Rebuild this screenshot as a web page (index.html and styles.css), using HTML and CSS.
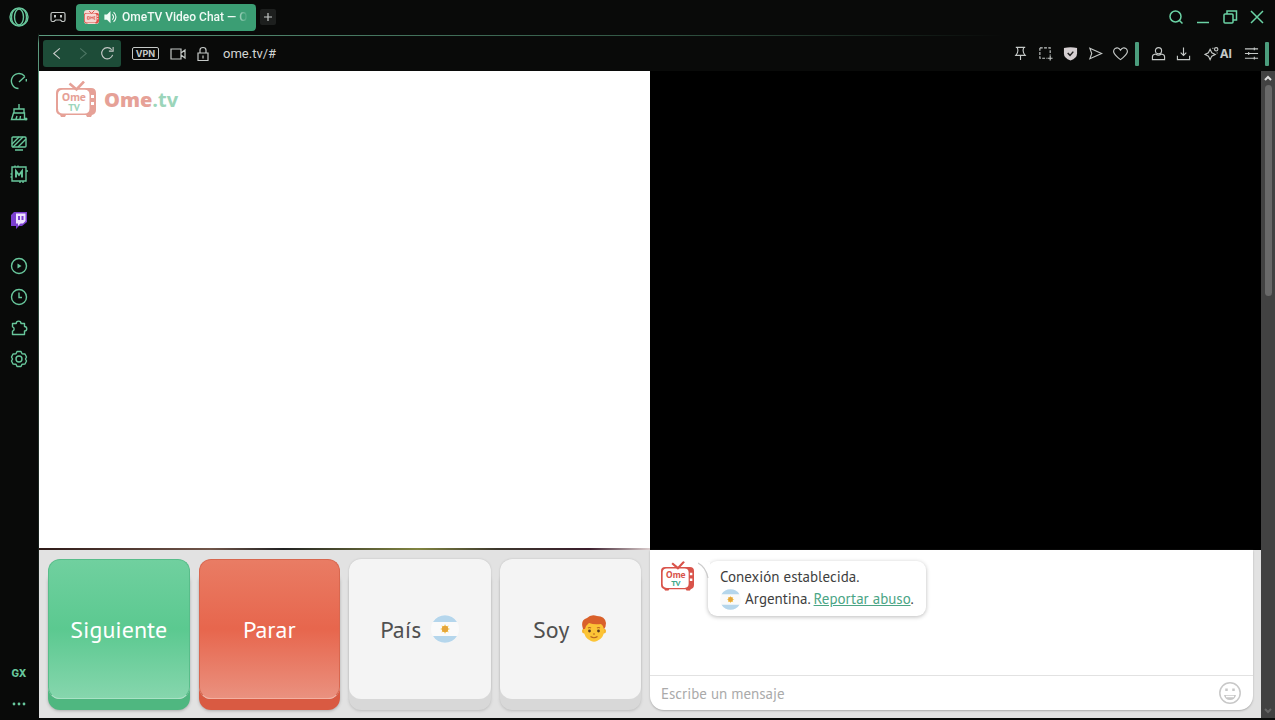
FILE: index.html
```html
<!DOCTYPE html>
<html lang="es">
<head>
    <meta charset="UTF-8">
    <meta name="viewport" content="width=device-width, initial-scale=1.0">
    <title>OmeTV Video Chat</title>
    <link rel="stylesheet" href="styles.css">
</head>
<body>

<!-- Shared drawings -->
<svg class="defs" aria-hidden="true">
    <symbol id="tv" viewBox="0 0 40 36">
        <path d="M13.500 2.500L20.500 8.500L28 0.500" fill="none" stroke="currentColor" stroke-width="2.6"/>
        <path fill="currentColor" fill-rule="evenodd" d="M5 7h30q5 0 5 5v17q0 4-4 5l-1 2h-4l-1-2H10l-1 2H5l-1-2q-4-1-4-5V12q0-5 5-5zM7 8.800q-5 0-5 5v13.600q0 5 5 5h21.500q5 0 5-5V13.800q0-5-5-5z"/>
        <path d="M35 14h3v3h-3zM35 21h3v3h-3z" fill="#fff"/>
    </symbol>
    <symbol id="flag" viewBox="0 0 28 28">
        <circle cx="14" cy="14" r="14" fill="#fafafa"/>
        <path d="M2 7A14 14 0 0 1 26 7zM2 21A14 14 0 0 0 26 21z" fill="#b5d6ec"/>
        <path d="M14 9l1.200 2.500 2.500-1-1 2.500 2.500 1-2.500 1 1 2.500-2.500-1-1.200 2.500-1-2.500-2.500 1 1-2.500-2.500-1 2.500-1-1-2.500 2.500 1z" fill="#f8cf5b"/>
        <circle cx="14" cy="14" r="3.200" fill="#e5a53a"/>
    </symbol>
</svg>

<div class="browser">
    <nav class="sidebar">
        <button class="opera" aria-label="Menu"><svg viewBox="0 0 20 20"><circle cx="10" cy="10" r="9"/><ellipse cx="10" cy="10" rx="4.500" ry="8"/><path d="M7 1.500C1 5 1 15 7 18.500M13 1.500C19 5 19 15 13 18.500"/></svg></button>
        <div class="group">
            <button aria-label="Speed dial"><svg viewBox="0 0 18 18"><path d="M8.500 16.500A7.500 7.500 0 1 1 14.500 4M9 10l6-5.500M16.300 7v2.500"/></svg></button>
            <button aria-label="Cleaner"><svg viewBox="0 0 18 18"><path d="M9 1v5M4 10V6h10v4M3.500 10h11v6.500H1.500zM6 16l1-3M10 16l.500-3"/><circle class="fill" cx="16" cy="16" r="1.500"/></svg></button>
            <button aria-label="Monitor"><svg viewBox="0 0 18 18"><rect x="2" y="3" width="14" height="10" rx="1"/><path d="M2 10l7-7M3 13L13 3M8 13l8-8M5 16h8"/></svg></button>
            <button aria-label="Mods"><svg viewBox="0 0 18 18"><path d="M2 2h14v14H2zM5 .500v2M8 .500v2M13 16v2M10 16v2M.500 9H2M.500 12H2M16 6h2"/><path d="M6 12.500V6l3 4 3-4v6.500" stroke-width="1.900"/></svg></button>
        </div>
        <div class="group">
            <button aria-label="Twitch"><svg viewBox="0 0 18 18"><path class="twitch" d="M4 1h13v10l-5 4H9l-3 3v-3H1V4z"/><path class="twitch-in" d="M6 2.500h9.500V10l-2.500 2.500h-2.500L8 15v-2.500H6z"/><path class="twitch-eye" d="M9 5v4M12.500 5v4"/></svg></button>
        </div>
        <div class="group">
            <button aria-label="Player"><svg viewBox="0 0 18 18"><circle cx="9" cy="9" r="7.500"/><path class="fill" d="M7.500 6.500l4 2.500-4 2.500z"/></svg></button>
            <button aria-label="History"><svg viewBox="0 0 18 18"><circle cx="9" cy="9" r="7.500"/><path d="M9 4.500V9.500h3"/></svg></button>
            <button aria-label="Extensions"><svg viewBox="0 0 18 18"><path d="M2.500 4.500h3.700a2.400 2.400 0 0 1 4.800 0h3.500v3a2.200 2.200 0 0 1 0 4.500v3.500h-12v-3.300a2.300 2.300 0 0 0 0-4.400z" stroke-linejoin="round"/></svg></button>
            <button aria-label="Settings"><svg viewBox="0 0 18 18"><path d="M7 1.500h4l1 2.300 3 .200 1.500 3-1 2 1 2-1.500 3-3 .300-1 2.200H7l-1-2.200-3-.300-1.500-3 1-2-1-2 1.500-3 3-.200z" stroke-linejoin="round"/><circle cx="9" cy="9" r="3"/></svg></button>
        </div>
        <div class="group last">
            <button class="gx">GX</button>
            <button aria-label="More"><svg viewBox="0 0 18 18"><g class="fill"><circle cx="4" cy="9" r="1.400"/><circle cx="9" cy="9" r="1.400"/><circle cx="14" cy="9" r="1.400"/></g></svg></button>
        </div>
    </nav>

    <div class="window">
        <header class="tabs">
            <button class="icon" aria-label="GX Corner"><svg viewBox="0 0 16 16"><path d="M2.500 3.500h11q1.500 0 1.500 1.500v6q0 1.500-1.500 1.500H12L10.500 11h-5L4 12.500H2.500Q1 12.500 1 11V5q0-1.500 1.500-1.500z"/><path d="M5 6v2.500M11 6v2.500" stroke-width="2"/></svg></button>
            <button class="tab">
                <svg class="favicon" viewBox="0 0 40 36"><use href="#tv"/><path d="M9 17h5v7H9zM18 24v-7l3 4 3-4v7M30 17h-3v7h3" stroke-width="2"/></svg>
                <svg class="sound" viewBox="0 0 16 16"><path class="fill" d="M1 5h3l4-4v14l-4-4H1z"/><path d="M10 5q3 3 0 6M11.500 2.500q5.500 5.500 0 11"/></svg>
                <span>OmeTV Video Chat — O</span>
            </button>
            <button class="new-tab" aria-label="New tab"><svg viewBox="0 0 16 16"><path d="M8 4v8M4 8h8"/></svg></button>
            <div class="controls">
                <button aria-label="Search"><svg viewBox="0 0 16 16"><circle cx="7.500" cy="7.500" r="5.500"/><path d="M11.500 11.500l3 3"/></svg></button>
                <button aria-label="Minimize"><svg viewBox="0 0 16 16"><path d="M2 13.500h12"/></svg></button>
                <button aria-label="Restore"><svg viewBox="0 0 16 16"><rect x="2" y="5" width="9" height="9" rx="1"/><path d="M5 5V2h9.500v9H11"/></svg></button>
                <button aria-label="Close"><svg viewBox="0 0 16 16"><path d="M2 2l12 12M14 2L2 14"/></svg></button>
            </div>
        </header>

        <div class="toolbar">
            <div class="nav">
                <button aria-label="Back"><svg viewBox="0 0 16 16"><path d="M10.500 2.500L4 8l6.500 5.500"/></svg></button>
                <button aria-label="Forward" disabled><svg viewBox="0 0 16 16"><path d="M5.500 2.500L12 8l-6.500 5.500"/></svg></button>
                <button aria-label="Reload"><svg viewBox="0 0 16 16"><path d="M13.500 9.500A6 6 0 1 1 12.500 4M14 1v4.500H9.500"/></svg></button>
            </div>
            <button class="vpn">VPN</button>
            <button class="icon" aria-label="Camera"><svg viewBox="0 0 16 16"><path d="M1 3h10v10H1zM11 7l4-3v8l-4-3"/></svg></button>
            <button class="icon" aria-label="Site information"><svg viewBox="0 0 16 16"><path d="M3 7h10v7.500H3zM5 7V4q0-2.500 3-2.500T11 4v3M8 9.500v3"/></svg></button>
            <input class="address" type="text" value="ome.tv/#" aria-label="Address">
            <div class="tools">
                <button aria-label="Pin"><svg viewBox="0 0 16 16"><path d="M3 1.500h10M4.500 1.500Q6.500 6 3 10h10q-3.500-4-1.500-8.500M8 10v5"/></svg></button>
                <button aria-label="Snapshot"><svg viewBox="0 0 16 16"><path d="M2 2h11v8M2 2v11h8" stroke-dasharray="3 1.500"/><path d="M13 10.500v5M10.500 13h5"/></svg></button>
                <button aria-label="Blocker"><svg viewBox="0 0 16 16"><path class="shield" d="M1 2q7-1.500 14 0v6q0 5-7 7.500-7-2.500-7-7.500z"/><path class="check" d="M5 7.500l2.500 2.500L11 6"/></svg></button>
                <button aria-label="Send"><svg viewBox="0 0 16 16"><path d="M2 2.500L14.500 8 2 13.500 4 8z"/></svg></button>
                <button aria-label="Favourites"><svg viewBox="0 0 16 16"><path d="M8 14.500Q-2.500 7 2 2.800 5.500.500 8 4.500 10.500.500 14 2.800 18.500 7 8 14.500z"/></svg></button>
                <i class="bar"></i>
                <button class="after-bar" aria-label="Profile"><svg viewBox="0 0 16 16"><circle cx="8" cy="5" r="3.300"/><path d="M5 8.500q-3.500.500-3.500 3v3h13v-3q0-2.500-3.500-3-3 2.500-6 0z"/></svg></button>
                <button aria-label="Downloads"><svg viewBox="0 0 16 16"><path d="M8 1.500V10M5 7l3 3 3-3M1.500 10.500v4h13v-4"/></svg></button>
                <button class="ai"><svg viewBox="0 0 16 16"><path d="M6.500 3.500L8.300 7.200 12 9l-3.700 1.800-1.800 3.700-1.800-3.700L1 9l3.700-1.800z"/><circle cx="13" cy="3.500" r="1.800"/><path d="M9 2.500h1M13.500 7.500h1"/></svg>AI</button>
                <button aria-label="Easy setup"><svg viewBox="0 0 16 16"><path d="M1 3h14M1 8h14M1 13h14M11 1.500v3M5 6.500v3M11 11.500v3"/></svg></button>
                <i class="bar"></i>
            </div>
        </div>

        <div class="viewport">
            <main class="page">
                <section class="video partner">
                    <a class="logo" href="#">
                        <svg viewBox="0 0 40 36"><use href="#tv"/><text class="tv-ome" x="18" y="20" text-anchor="middle">Ome</text><text class="tv-tv" x="18" y="30" text-anchor="middle">TV</text></svg>
                        <span>Ome<b>.tv</b></span>
                    </a>
                    <div class="video-edge"></div>
                </section>
                <section class="video own"></section>

                <section class="buttons">
                    <button class="btn green">Siguiente</button>
                    <button class="btn red">Parar</button>
                    <button class="btn">País <svg viewBox="0 0 28 28"><use href="#flag"/></svg></button>
                    <button class="btn">Soy
                        <svg viewBox="0 0 28 28">
                            <circle cx="4.500" cy="16" r="2.500" fill="#f5b52e"/>
                            <circle cx="23.500" cy="16" r="2.500" fill="#f5b52e"/>
                            <path d="M4 10q0-6 10-6t10 6v6q0 7-7 10-3 1.500-6 0-7-3-7-10z" fill="#fcc436"/>
                            <path d="M3 14Q0 5 7 3q4-4 10-2 8 0 9 7 0 4-2 6-1-4-3-5-7 1-12-1-3 2-4 6z" fill="#d9602a"/>
                            <circle cx="9.500" cy="16" r="1.400" fill="#5b3a20"/>
                            <circle cx="18.500" cy="16" r="1.400" fill="#5b3a20"/>
                            <path d="M8 13q1.500-1 3 0M17 13q1.500-1 3 0M13 19h2M10.500 21.500q3.500 2.500 7 0" fill="none" stroke="#b96420"/>
                        </svg>
                    </button>
                </section>

                <section class="chat-wrap">
                    <div class="chat">
                        <div class="messages">
                            <svg class="avatar" viewBox="0 0 40 36"><use href="#tv"/><text class="tv-ome" x="18" y="20" text-anchor="middle">Ome</text><text class="tv-tv" x="18" y="30" text-anchor="middle">TV</text></svg>
                            <div class="bubble">
                                <svg class="tail" viewBox="0 0 12 16"><path d="M12 0H0q7 4 10 14l2 2z" fill="#fff"/><path d="M0 1q8 4 10 15" fill="none" stroke="#ccc"/></svg>
                                <p>Conexión establecida.</p>
                                <p class="country"><svg viewBox="0 0 28 28"><use href="#flag"/></svg><span>Argentina. <a href="#">Reportar abuso</a>.</span></p>
                            </div>
                        </div>
                        <form class="compose">
                            <input type="text" placeholder="Escribe un mensaje" aria-label="Escribe un mensaje">
                            <button type="button" aria-label="Emoji"><svg viewBox="0 0 24 24"><circle cx="12" cy="12" r="10.200"/><path class="fill" d="M6 14h12q-1 5-6 5t-6-5z"/><path d="M8.500 7.500v2.500M15.500 7.500v2.500" stroke-width="2.500"/><path d="M8 15.500h8" stroke="#fff"/></svg></button>
                        </form>
                    </div>
                </section>
            </main>
            <div class="scrollbar">
                <svg viewBox="0 0 8 6"><path d="M1 5l3-3 3 3"/></svg>
                <div class="thumb"></div>
                <svg class="down" viewBox="0 0 8 6"><path d="M1 1l3 3 3-3"/></svg>
            </div>
        </div>
    </div>
</div>

</body>
</html>
```
FILE: styles.css
```css
* {
    box-sizing: border-box;
}
body {
    margin: 0;
    background: #090a09;
    font-family: "PT Sans", "Noto Sans", sans-serif;
}
button {
    margin: 0;
    padding: 0;
    border: none;
    background: none;
    color: inherit;
    font: inherit;
    cursor: pointer;
}
p {
    margin: 0;
}
svg {
    display: block;
    fill: none;
    stroke: currentColor;
    stroke-width: 1.2;
}
.fill {
    fill: currentColor;
    stroke: none;
}
.defs {
    display: none;
}
symbol {
    stroke: none;
}
.tv-ome {
    fill: currentColor;
    stroke: none;
    font: 600 12px "PT Sans", "Noto Sans", sans-serif;
}
.tv-tv {
    fill: var(--tv, #3fa98a);
    stroke: none;
    font: 700 10px "PT Sans", "Noto Sans", sans-serif;
}

.browser {
    display: flex;
    height: 100vh;
}

/* Left sidebar */
.sidebar {
    display: flex;
    flex-direction: column;
    gap: 15px;
    width: 39px;
    padding-bottom: 1px;
    color: #68c79c;
    border-right: 1px solid;
    border-image: linear-gradient(transparent 34px, #5d9c80 44px, #26382f 50%, #090a09) 1;
}
.sidebar .opera {
    height: 34px;
    margin-bottom: 1px;
}
.sidebar button svg {
    width: 18px;
    height: 18px;
    margin: auto;
    stroke-width: 1.4;
}
.sidebar .opera svg {
    width: 20px;
    height: 20px;
}
.group {
    display: flex;
    flex-direction: column;
}
.sidebar .opera + .group {
    margin-top: 15px;
}
.group button {
    height: 31px;
}
.group.last {
    margin-top: auto;
}
.gx {
    font: 800 10px Inter, sans-serif;
}
.twitch {
    fill: #7b3fd0;
    stroke: none;
}
.twitch-in {
    fill: #eee3ff;
    stroke: none;
}
.twitch-eye {
    stroke: #7b3fd0;
    stroke-width: 2;
}

/* Tab strip */
.window {
    display: flex;
    flex-direction: column;
    flex: 1;
    min-width: 0;
    padding-bottom: 2px;
}
.tabs {
    display: flex;
    align-items: center;
    height: 35px;
    padding: 0 5px 1px 11px;
    color: #c5c9c7;
}
.tabs .icon svg {
    width: 16px;
    height: 16px;
}
.tab {
    display: flex;
    align-items: center;
    gap: 4px;
    width: 180px;
    height: 27px;
    margin: 0 4px 0 10px;
    padding: 0 8px;
    border-radius: 4px;
    background: #3b9e74;
    color: #f0faf5;
    font: 500 12px Roboto, sans-serif;
}
.tab svg {
    flex: none;
    width: 15px;
    height: 14px;
}
.tab .favicon {
    background: #f6d8d3;
    color: #dc5148;
    border-radius: 3px;
}
.tab span {
    white-space: nowrap;
    -webkit-mask-image: linear-gradient(90deg, #000 88%, transparent);
    mask-image: linear-gradient(90deg, #000 88%, transparent);
}
.new-tab {
    width: 16px;
    height: 16px;
    background: #1d1f1e;
    border-radius: 2px;
}
.controls {
    display: flex;
    margin-left: auto;
    color: #6bd3a5;
}
.controls button {
    width: 27px;
    height: 27px;
}
.controls svg {
    width: 16px;
    height: 16px;
    margin: auto;
    stroke-width: 1.5;
}

/* Address bar */
.toolbar {
    display: flex;
    align-items: center;
    height: 36px;
    padding: 0 6px 0 4px;
    border-top: 1px solid;
    border-image: linear-gradient(90deg, #5d9c80, #315543 50%, #090a09 78%) 1;
    color: #c5c9c7;
}
.nav {
    display: flex;
    height: 27px;
    margin-right: 11px;
    padding: 0 1px 0 2px;
    border-radius: 3px;
    background: #1d4c38;
}
.nav button {
    width: 25px;
    padding: 0 5px;
}
.nav button:disabled {
    color: #4b7563;
}
.vpn {
    width: 27px;
    height: 13px;
    margin-right: 11px;
    border: 1px solid #c5c9c7;
    border-radius: 2px;
    font: 700 9px/11px Inter, sans-serif;
}
.toolbar .icon {
    width: 16px;
    height: 16px;
    margin-right: 9px;
}
.address {
    flex: 1;
    min-width: 0;
    margin-left: 3px;
    padding: 0;
    border: none;
    outline: none;
    background: none;
    color: #d2d5d3;
    font: 13px Roboto, sans-serif;
}
.tools {
    display: flex;
    align-items: center;
}
.tools button {
    width: 25px;
    height: 25px;
}
.tools svg {
    width: 15px;
    height: 15px;
    margin: auto;
}
.bar {
    width: 4px;
    height: 24px;
    margin-left: 2px;
    border-radius: 1px;
    background: #4b9d7d;
}
.tools .after-bar {
    margin-left: 7px;
}
.toolbar .bar:last-child {
    margin-left: 1px;
}
.shield {
    fill: #d5cfd1;
    stroke: none;
}
.check {
    stroke: #222;
    stroke-width: 1.6;
}
.tools .ai {
    display: flex;
    align-items: center;
    width: 43px;
    padding: 0 7px;
    font: 700 12px Inter, sans-serif;
}

/* Page */
.viewport {
    display: flex;
    flex: 1;
    min-height: 0;
}
.page {
    display: grid;
    grid-template-columns: 1fr 1fr;
    grid-template-rows: 1fr auto;
    flex: 1;
    background: #e2e2e2;
}
.video {
    display: flex;
    flex-direction: column;
}
.partner {
    background: #fff;
}
.own {
    background: #000;
}
.logo {
    display: flex;
    align-items: center;
    gap: 8px;
    padding: 10px 17px;
    color: #e6a197;
    text-decoration: none;
    font: 800 20px "Open Sans", sans-serif;
    --tv: #9bd5ba;
}
.logo svg {
    width: 40px;
    height: 36px;
}
.logo b {
    color: #9bd5ba;
    font-weight: 700;
}
.video-edge {
    height: 2px;
    margin-top: auto;
    background: linear-gradient(90deg, #2e1a18, #71564a 28%, #222 40%, #818541 62%, #3d382d 75%, #3a1d2b 90%, #dccfcf);
}

/* Control buttons */
.buttons {
    display: grid;
    grid-template-columns: repeat(4, 1fr);
    gap: 9px;
    padding: 9px 9px 19px;
}
.btn {
    display: flex;
    align-items: center;
    justify-content: center;
    gap: 10px;
    height: 140px;
    border-radius: 12px;
    background: #f4f4f4;
    box-shadow: 0 11px 0 #d8d8d8, 0 12px 3px #bbb, 0 0 2px #bbb;
    color: #505050;
    font-size: 24px;
}
.btn svg {
    width: 28px;
    height: 28px;
    stroke: none;
}
.green {
    border: 1px solid #58bd8a;
    border-bottom-color: #a8e2c5;
    background: linear-gradient(#70d09f, #5bc990 50%, #86d6ad);
    box-shadow: 0 11px 0 #4fb780, 0 12px 3px #aaa;
    color: #fff;
}
.red {
    border: 1px solid #d8674f;
    border-bottom-color: #f4b0a1;
    background: linear-gradient(#e97c64, #e7664d 50%, #ea917f);
    box-shadow: 0 11px 0 #d95a42, 0 12px 3px #aaa;
    color: #fff;
}

/* Chat */
.chat-wrap {
    display: flex;
    padding: 0 8px 8px 0;
}
.chat {
    display: flex;
    flex-direction: column;
    flex: 1;
    border-radius: 0 0 14px 14px;
    background: #fff;
    box-shadow: 0 1px 2px #aaa;
}
.messages {
    display: flex;
    align-items: flex-start;
    flex: 1;
    gap: 14px;
    padding: 11px;
    color: #d9534a;
}
.avatar {
    width: 33px;
    height: 30px;
    stroke: none;
}
.bubble {
    position: relative;
    padding: 5px 12px 6px;
    border-radius: 9px;
    background: #fff;
    box-shadow: 0 1px 4px #bbb;
    color: #3f3f3f;
    font-size: 15px;
    line-height: 22px;
}
.tail {
    position: absolute;
    top: 1px;
    left: -10px;
    width: 12px;
    height: 16px;
    stroke: none;
}
.country {
    display: flex;
    align-items: center;
    gap: 4px;
}
.country svg {
    width: 21px;
    height: 21px;
    stroke: none;
}
.country a {
    color: #4ba585;
}
.compose {
    display: flex;
    align-items: center;
    height: 35px;
    padding: 0 11px;
    border-top: 1px solid #e2e2e2;
}
.compose input {
    flex: 1;
    min-width: 0;
    padding: 0;
    border: none;
    outline: none;
    background: none;
    font: inherit;
    font-size: 15px;
}
.compose input::placeholder {
    color: #aaa;
}
.compose button {
    color: #c8c8c8;
}
.compose svg {
    width: 24px;
    height: 24px;
    stroke-width: 1.5;
}

/* Scrollbar */
.scrollbar {
    display: flex;
    flex-direction: column;
    align-items: center;
    width: 14px;
    padding: 4px 0;
    background: #424242;
    color: #ddd;
}
.scrollbar svg {
    width: 8px;
    height: 6px;
    stroke-width: 2;
}
.thumb {
    width: 7px;
    height: 33%;
    margin: 4px 0 auto;
    border-radius: 4px;
    background: #696969;
}
.scrollbar .down {
    color: #666;
}
```
